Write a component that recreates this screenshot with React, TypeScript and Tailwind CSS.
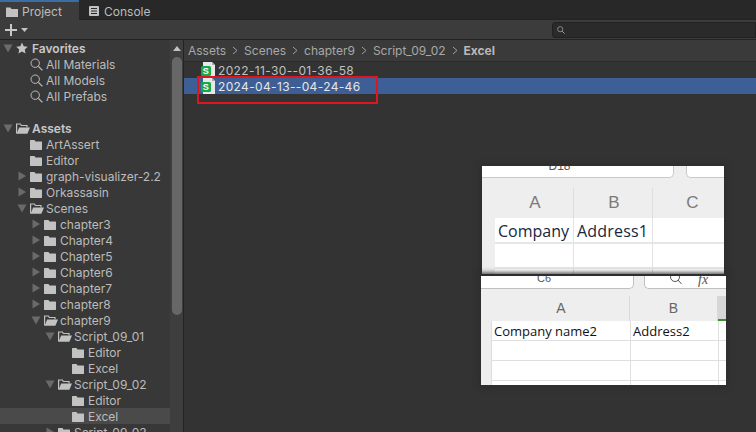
import { Fragment } from "react";

interface TreeRow {
  label: string;
  depth: number;
  arrow?: "open" | "closed";
  icon?: "folder" | "open" | "star" | "search" | "none";
  bold?: boolean;
  selected?: boolean;
}

const rows: TreeRow[] = [
  { label: "Favorites", depth: 0, arrow: "open", icon: "star", bold: true },
  { label: "All Materials", depth: 1, icon: "search" },
  { label: "All Models", depth: 1, icon: "search" },
  { label: "All Prefabs", depth: 1, icon: "search" },
  { label: "", depth: 0, icon: "none" },
  { label: "Assets", depth: 0, arrow: "open", icon: "open", bold: true },
  { label: "ArtAssert", depth: 1 },
  { label: "Editor", depth: 1 },
  { label: "graph-visualizer-2.2", depth: 1, arrow: "closed" },
  { label: "Orkassasin", depth: 1, arrow: "closed" },
  { label: "Scenes", depth: 1, arrow: "open", icon: "open" },
  { label: "chapter3", depth: 2, arrow: "closed" },
  { label: "Chapter4", depth: 2, arrow: "closed" },
  { label: "Chapter5", depth: 2, arrow: "closed" },
  { label: "Chapter6", depth: 2, arrow: "closed" },
  { label: "Chapter7", depth: 2, arrow: "closed" },
  { label: "chapter8", depth: 2, arrow: "closed" },
  { label: "chapter9", depth: 2, arrow: "open", icon: "open" },
  { label: "Script_09_01", depth: 3, arrow: "open", icon: "open" },
  { label: "Editor", depth: 4 },
  { label: "Excel", depth: 4 },
  { label: "Script_09_02", depth: 3, arrow: "open", icon: "open" },
  { label: "Editor", depth: 4 },
  { label: "Excel", depth: 4, selected: true },
  { label: "Script_09_03", depth: 3, arrow: "closed" },
];

const crumbs = ["Assets", "Scenes", "chapter9", "Script_09_02"];

function Folder() {
  return (
    <svg width="12" height="11" viewBox="0 0 12 11" className="shrink-0">
      <path d="M0 1.5 L0.5 1 H4.5 L5.5 2.5 H11.5 L12 3 V10.5 L11.5 11 H0.5 L0 10.5 Z" fill="#c2c2c2" />
    </svg>
  );
}

function FolderOpen() {
  return (
    <svg width="14" height="11" viewBox="0 0 14 11" className="shrink-0">
      <path d="M0.6 10.4 V1 H4.4 L5.4 2.5 H11 V4.5" fill="none" stroke="#c2c2c2" strokeWidth="1.2" />
      <path d="M0.6 10.8 L3.2 4.4 H14 L11.4 10.8 Z" fill="#c2c2c2" />
    </svg>
  );
}

function Star() {
  return (
    <svg width="12" height="12" viewBox="0 0 24 24" className="shrink-0">
      <path d="M12 1 L15.4 8.4 L23.5 9.3 L17.5 14.8 L19.1 22.8 L12 18.8 L4.9 22.8 L6.5 14.8 L0.5 9.3 L8.6 8.4 Z" fill="#c4c4c4" />
    </svg>
  );
}

function Search({ size = 13 }: { size?: number }) {
  return (
    <svg width={size} height={size} viewBox="0 0 13 13" className="shrink-0" fill="none" stroke="#bdbdbd">
      <circle cx="5.2" cy="5.2" r="4.2" strokeWidth="1" />
      <path d="M8.4 8.4 L12.4 12.4" strokeWidth="1.3" />
    </svg>
  );
}

function Arrow({ kind }: { kind: "open" | "closed" }) {
  if (kind === "open") {
    return (
      <svg width="10" height="10" viewBox="0 0 10 10" className="shrink-0">
        <path d="M0.5 1.5 H9.5 L5 9.5 Z" fill="#6a6a6a" />
      </svg>
    );
  }
  return (
    <svg width="10" height="10" viewBox="0 0 10 10" className="shrink-0">
      <path d="M1.5 0.5 L9 5 L1.5 9.5 Z" fill="#6a6a6a" />
    </svg>
  );
}

function SheetIcon() {
  return (
    <div className="relative w-[15px] h-4 shrink-0">
      <svg width="15" height="16" viewBox="0 0 15 16" className="block">
        <path d="M2 0 H11 L14 3 V16 H2 Z" fill="#e8e8e8" />
        <path d="M11 0 L14 3 H11 Z" fill="#a8a8a8" />
        <rect x="0" y="4" width="10" height="10" rx="1.5" fill="#17a84f" />
      </svg>
      <span className="absolute left-0 top-[4px] w-[10px] h-[10px] flex items-center justify-center text-[9px] leading-none font-bold text-white font-['Liberation_Sans',sans-serif]">
        S
      </span>
    </div>
  );
}

function Tree() {
  return (
    <div className="flex-1 min-w-0 overflow-hidden">
      {rows.map((row, i) => (
        <div
          key={i}
          className={`flex items-center h-4 shrink-0 ${row.selected ? "bg-[#4a4a4a]" : ""}`}
        >
          <div className="flex items-center" style={{ paddingLeft: 3 + row.depth * 14 }}>
            <span className="w-[13px] flex justify-start">
              {row.arrow && <Arrow kind={row.arrow} />}
            </span>
            <span className="w-[15px] flex items-center">
              {row.icon === "star" && <Star />}
              {row.icon === "search" && <Search />}
              {row.icon === "open" && <FolderOpen />}
              {row.icon === undefined && <Folder />}
            </span>
          </div>
          <span
            className={`ml-[1px] pt-[1px] text-[12px] leading-4 whitespace-nowrap ${
              row.bold ? "font-semibold text-[#c8c8c8]" : "text-[#bcbcbc]"
            }`}
          >
            {row.label}
          </span>
        </div>
      ))}
    </div>
  );
}

function ExcelOne() {
  return (
    <div className="absolute left-[482px] top-[166px] w-[242px] h-[108px] overflow-hidden bg-[#eeeeee] font-['Liberation_Sans',sans-serif] shadow-[0_0_5px_3px_#2e2e2e]">
      <div className="flex gap-[12px] h-[12px]">
        <div className="w-[192px] bg-white border-b border-r border-[#c9c9c9] rounded-br-[5px] flex justify-center">
          <span className="text-[12px] leading-[6px] text-[#555555] -mt-[3px] mr-[36px]">D18</span>
        </div>
        <div className="flex-1 bg-white border-b border-l border-[#c9c9c9] rounded-bl-[5px]" />
      </div>
      <div className="flex h-[30px] mt-[10px] ml-[13px] text-[#7b7b7b] text-[17px]">
        <div className="w-[79px] shrink-0 flex items-center justify-center border-r border-[#dedede] pl-[2px]">A</div>
        <div className="w-[79px] shrink-0 flex items-center justify-center border-r border-[#dedede] pl-[2px]">B</div>
        <div className="w-[79px] shrink-0 flex items-center justify-center">C</div>
      </div>
      <div className="ml-[13px] bg-white">
        <div className="flex h-[26px] border-b-2 border-[#e6e6e6] text-[16px] leading-[26px] text-[#16263f] font-['Open_Sans',sans-serif]">
          <div className="w-[79px] border-r border-[#e2e2e2] pl-[3px] whitespace-nowrap overflow-hidden">Company</div>
          <div className="w-[79px] border-r border-[#e2e2e2] pl-[3px] whitespace-nowrap overflow-hidden tracking-[0.2px]">Address1</div>
          <div className="flex-1" />
        </div>
        <div className="flex h-[25px] border-b-2 border-[#e6e6e6]">
          <div className="w-[79px] border-r border-[#e2e2e2]" />
          <div className="w-[79px] border-r border-[#e2e2e2]" />
        </div>
        <div className="flex h-[8px]">
          <div className="w-[79px] border-r border-[#e2e2e2]" />
          <div className="w-[79px] border-r border-[#e2e2e2]" />
        </div>
      </div>
    </div>
  );
}

function ExcelTwo() {
  return (
    <div className="absolute left-[481px] top-[276px] w-[245px] h-[109px] overflow-hidden bg-[#eeeeee] font-['Liberation_Sans',sans-serif] shadow-[0_0_5px_3px_#2e2e2e]">
      <div className="flex gap-[10px] h-[13px]">
        <div className="w-[153px] bg-white border-b border-r border-[#c0c0c0] rounded-br-[5px] flex justify-center">
          <span className="text-[11px] leading-[6px] text-[#555555] -mt-[1px] mr-[26px]">C6</span>
        </div>
        <div className="flex-1 bg-white border-b border-l border-[#c0c0c0] rounded-bl-[5px] flex items-start gap-[15px] pl-[24px]">
          <svg width="14" height="10" viewBox="0 0 14 10" fill="none" stroke="#555555" className="shrink-0">
            <circle cx="6" cy="1" r="4.5" />
            <path d="M9 4 L12.5 8" />
          </svg>
          <span className="text-[14px] italic leading-[7px] text-[#555555] font-['Liberation_Serif',serif]">fx</span>
        </div>
      </div>
      <div className="flex h-[25px] mt-[7px] ml-[10px] text-[#666666] text-[14px]">
        <div className="w-[139px] shrink-0 flex items-center justify-center border-r border-[#d8d8d8] pl-[2px]">A</div>
        <div className="w-[88px] shrink-0 flex items-center justify-center border-r border-[#d8d8d8]">B</div>
        <div className="flex-1 bg-[#d6d6d6] border-b-2 border-[#3f8a2f]" />
      </div>
      <div className="ml-[10px] bg-white border-l border-[#dddddd]">
        {["Company name2", "", "", ""].map((text, i) => (
          <div
            key={i}
            className="flex h-[20px] border-b border-[#dfdfdf] text-[13px] leading-[21px] text-[#111111] font-['Open_Sans',sans-serif]"
          >
            <div className="w-[139px] border-r border-[#dfdfdf] pl-[2px] whitespace-nowrap">{text}</div>
            <div className="w-[88px] border-r border-[#dfdfdf] pl-[2px] whitespace-nowrap">{i === 0 ? "Address2" : ""}</div>
          </div>
        ))}
      </div>
    </div>
  );
}

export default function App() {
  return (
    <div className="relative w-[756px] h-[432px] overflow-hidden bg-[#333333] font-['Inter',sans-serif] text-[#bcbcbc]">
      {/* tab bar */}
      <div className="flex h-5 bg-[#282828] border-b border-[#232323]">
        <div className="w-[79px] h-5 bg-[#3c3c3c] border-t-2 border-[#3a6ea5] flex items-center pl-[6px] pt-[2px] gap-[4px] text-[12px]">
          <svg width="12" height="10" viewBox="0 0 12 10" className="shrink-0 -mt-[1px]">
            <path d="M0 0.5 H4.5 L5.5 2 H12 V10 H0 Z" fill="#c2c2c2" />
          </svg>
          Project
        </div>
        <div className="flex items-center pl-[10px] pt-[5px] gap-[5px] text-[12px]">
          <svg width="10" height="10" viewBox="0 0 10 10" className="shrink-0 -mt-[2px]">
            <rect width="10" height="10" rx="1" fill="#c2c2c2" />
            <path d="M2 2.5 H8 M2 5 H8 M2 7.5 H8" stroke="#282828" />
          </svg>
          Console
        </div>
      </div>
      {/* toolbar */}
      <div className="flex items-center h-5 bg-[#3c3c3c] border-b border-[#232323] pl-[5px] pr-0">
        <svg width="12" height="12" viewBox="0 0 12 12" className="shrink-0">
          <path d="M6 0 V12 M0 6 H12" stroke="#c8c8c8" strokeWidth="2" />
        </svg>
        <svg width="7" height="4" viewBox="0 0 7 4" className="ml-[4px] shrink-0">
          <path d="M0 0 H7 L3.5 4 Z" fill="#c2c2c2" />
        </svg>
        <div className="ml-auto w-[204px] h-[16px] bg-[#2a2a2a] border border-[#212121] rounded-l-[3px] flex items-center pl-[4px]">
          <Search size={8} />
        </div>
      </div>
      <div className="flex h-[392px]">
        {/* left tree */}
        <div className="flex w-[184px] shrink-0 bg-[#383838] border-r border-[#232323]">
          <Tree />
          <div className="w-[13px] shrink-0 bg-[#3e3e3e] flex flex-col items-center pt-[6px]">
            <svg width="8" height="5" viewBox="0 0 8 5" className="shrink-0">
              <path d="M0 5 L4 0 L8 5 Z" fill="#c2c2c2" />
            </svg>
            <div className="w-[10px] h-[258px] mt-[6px] rounded-[5px] bg-[#676767]" />
          </div>
        </div>
        {/* right panel */}
        <div className="flex-1 min-w-0 flex flex-col">
          <div className="h-[22px] bg-[#3a3a3a] border-b border-[#2c2c2c] flex items-center pl-[4px] gap-[6px] text-[12px] text-[#a8a8a8]">
            {crumbs.map((c) => (
              <Fragment key={c}>
                <span>{c}</span>
                <svg width="6" height="9" viewBox="0 0 6 9" fill="none" stroke="#a0a0a0" className="shrink-0">
                  <path d="M1 1 L5 4.5 L1 8" />
                </svg>
              </Fragment>
            ))}
            <span className="font-bold text-[#b8b8b8]">Excel</span>
          </div>
          <div className="flex items-center h-4 pl-[17px] gap-[2px] text-[12px] tracking-[0.35px] text-[#c0c0c0]">
            <SheetIcon />
            <span className="pt-[1px]">2022-11-30--01-36-58</span>
          </div>
          <div className="flex items-center h-4 pl-[17px] gap-[2px] text-[12px] tracking-[0.35px] bg-[#3e5f96] text-[#e6e6e6]">
            <SheetIcon />
            <span className="pt-[1px]">2024-04-13--04-24-46</span>
          </div>
        </div>
      </div>
      {/* annotation and pasted pictures */}
      <div className="absolute left-[197px] top-[76px] w-[181px] h-[28px] border-2 border-[#e0161f]" />
      <ExcelOne />
      <ExcelTwo />
    </div>
  );
}
